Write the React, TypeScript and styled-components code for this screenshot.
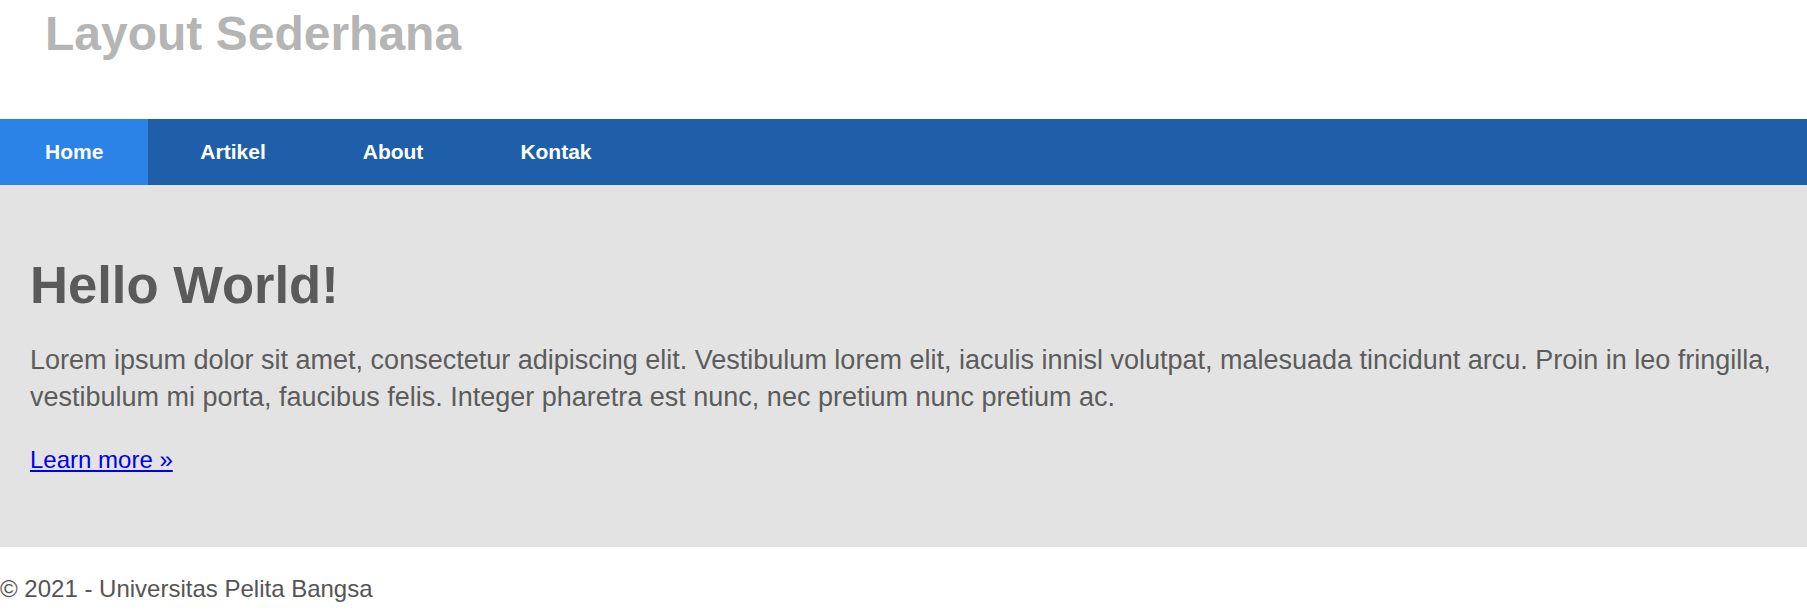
import React from "react";
import styled, { createGlobalStyle } from "styled-components";

const GlobalStyle = createGlobalStyle`
  html, body {
    margin: 0;
    padding: 0;
    background: #ffffff;
    font-family: "Liberation Sans", Arial, sans-serif;
  }
`;

const Page = styled.div`
  display: flex;
  flex-direction: column;
  width: 100%;
`;

const Header = styled.header`
  height: 119px;
  box-sizing: border-box;
  padding: 6px 0 0 45px;
`;

const SiteTitle = styled.h1`
  margin: 0;
  font-size: 48px;
  line-height: 56px;
  font-weight: 700;
  color: #b5b5b5;
`;

const Nav = styled.nav`
  display: flex;
  gap: 7px;
  height: 66px;
  background: #1f5fa9;
`;

const NavLink = styled.a<{ $active?: boolean }>`
  display: block;
  padding: 0 45px;
  line-height: 66px;
  font-size: 21px;
  font-weight: 700;
  color: #ffffff;
  text-decoration: none;
  background: ${(p) => (p.$active ? "#2b82e7" : "transparent")};
`;

const Hero = styled.section`
  background: #e3e3e3;
  padding: 70px 28px 73px 30px;
`;

const HeroTitle = styled.h2`
  margin: 0 0 27px;
  font-size: 52.6px;
  line-height: 60px;
  font-weight: 700;
  color: #5a5a5a;
`;

const HeroText = styled.p`
  margin: 0 0 30px;
  font-size: 27px;
  line-height: 37px;
  color: #5c5c5c;
`;

const MoreLink = styled.a`
  display: inline-block;
  font-size: 24px;
  line-height: 28px;
  color: #0000ee;
  text-decoration: underline;
`;

const Footer = styled.footer`
  padding-top: 28px;
  font-size: 24px;
  line-height: 28px;
  color: #555555;
`;

const links = ["Home", "Artikel", "About", "Kontak"];

export default function App() {
  return (
    <>
      <GlobalStyle />
      <Page>
        <Header>
          <SiteTitle>Layout Sederhana</SiteTitle>
        </Header>
        <Nav>
          {links.map((l, i) => (
            <NavLink key={l} href="#" $active={i === 0}>
              {l}
            </NavLink>
          ))}
        </Nav>
        <Hero>
          <HeroTitle>Hello World!</HeroTitle>
          <HeroText>
            Lorem ipsum dolor sit amet, consectetur adipiscing elit. Vestibulum lorem elit, iaculis innisl volutpat,
            malesuada tincidunt arcu. Proin in leo fringilla, vestibulum mi porta, faucibus felis. Integer pharetra est
            nunc, nec pretium nunc pretium ac.
          </HeroText>
          <MoreLink href="#">Learn more »</MoreLink>
        </Hero>
        <Footer>© 2021 - Universitas Pelita Bangsa</Footer>
      </Page>
    </>
  );
}
